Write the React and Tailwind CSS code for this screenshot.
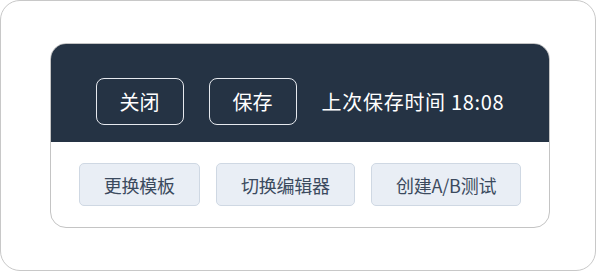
import React from "react";

const FONT = { fontFamily: '"Noto Sans CJK SC", "Liberation Sans", sans-serif' };

export default function App() {
  const actions = ["更换模板", "切换编辑器", "创建A/B测试"];

  return (
    <div className="w-[596px] h-[271px] bg-white" style={FONT}>
      <div className="w-[596px] h-[271px] rounded-[20px] border border-[#c8c8c8] pt-[42px] px-[49px]">
        {/* card */}
        <div className="w-[500px] rounded-[16px] border border-[#c4c4c4] overflow-hidden bg-white">
          <div className="bg-[#253344] flex items-center justify-center gap-[25px] pt-[34px] pb-[17px]">
            <button className="w-[88px] h-[47px] rounded-[8px] border border-[#e6e9ee] text-white text-[20px] leading-[28px]">
              关闭
            </button>
            <button className="w-[88px] h-[47px] rounded-[8px] border border-[#e6e9ee] text-white text-[20px] leading-[28px]">
              保存
            </button>
            <span className="text-white text-[20px] leading-[28px] tracking-[0.7px]">上次保存时间 18:08</span>
          </div>
          <div className="flex items-center justify-center gap-4 pt-[21px] pb-[21px]">
            {actions.map((label) => (
              <button
                key={label}
                className="h-[43px] px-6 rounded-[5px] border border-[#cfd8e3] bg-[#e9eef5] text-[#3b4a5e] text-[18px] leading-[26px] tracking-[-0.2px]"
              >
                {label}
              </button>
            ))}
          </div>
        </div>
      </div>
    </div>
  );
}
